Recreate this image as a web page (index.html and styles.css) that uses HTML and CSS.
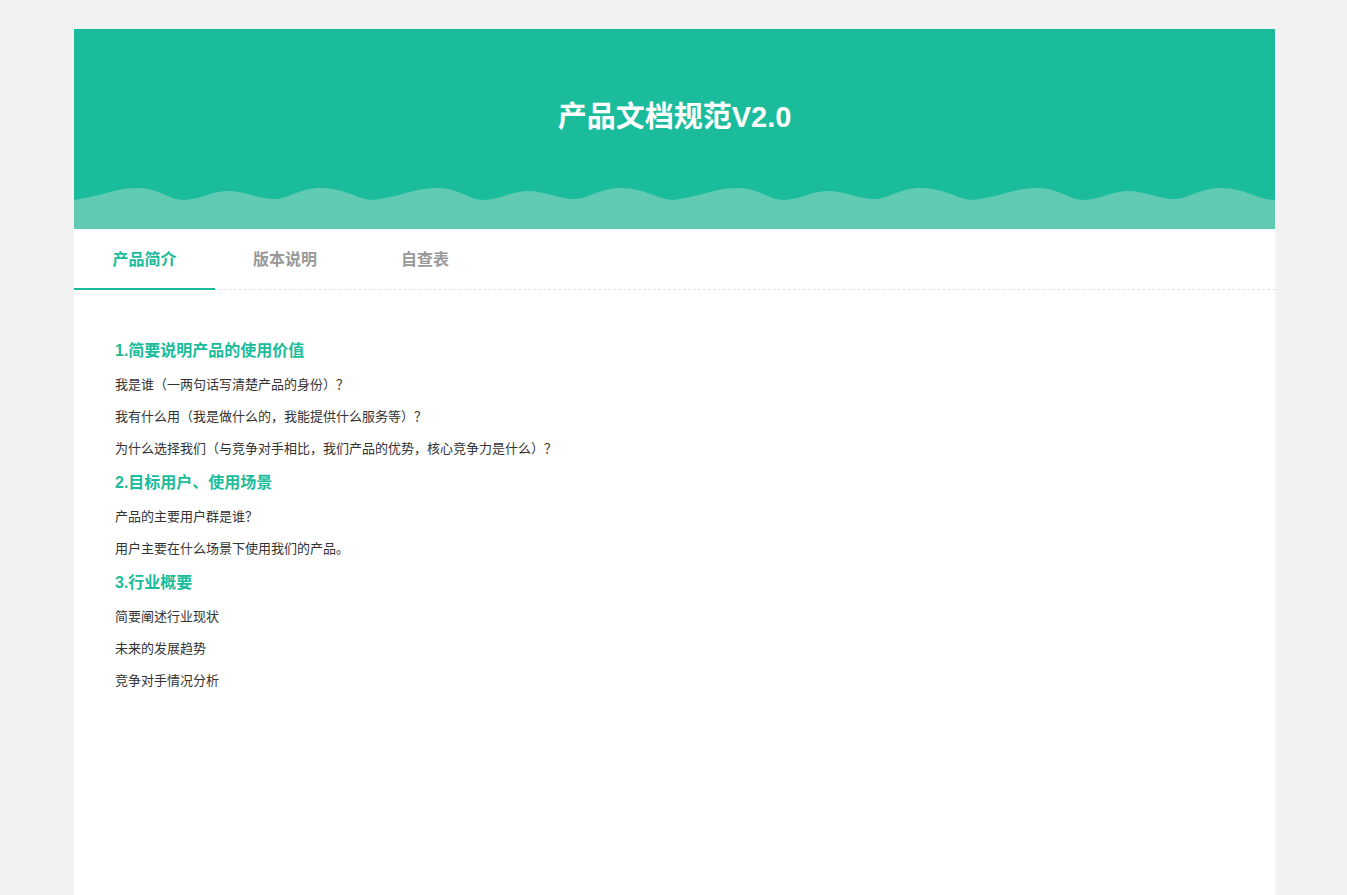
FILE: index.html
```html
<!DOCTYPE html>
<html lang="zh-CN">
<head>
<meta charset="utf-8">
<title>产品文档规范V2.0</title>
<link rel="stylesheet" href="styles.css">
</head>
<body>
<div class="page">
  <div class="doc">
    <header class="banner">
      <h1 class="banner-title">产品文档规范V2.0</h1>
      <svg class="wave" width="100%" height="42" xmlns="http://www.w3.org/2000/svg" preserveAspectRatio="none">
        <defs>
          <pattern id="wavetile" x="0" y="0" width="300" height="42" patternUnits="userSpaceOnUse">
            <path d="M0,13 C25,10 40,1 63,1 C85,1 95,13 110,13 C125,13 138,4 153,4 C170,4 185,12 200,12 C215,12 225,1 247,1 C270,1 285,13 300,13 L300,42 L0,42 Z" fill="#60cab3"/>
          </pattern>
        </defs>
        <rect x="0" y="0" width="100%" height="42" fill="url(#wavetile)"/>
      </svg>
    </header>
    <nav class="tabs">
      <div class="tab active">产品简介</div>
      <div class="tab">版本说明</div>
      <div class="tab">自查表</div>
    </nav>
    <main class="content">
      <h2 class="sec-title">1.简要说明产品的使用价值</h2>
      <p class="line">我是谁（一两句话写清楚产品的身份）？</p>
      <p class="line">我有什么用（我是做什么的，我能提供什么服务等）？</p>
      <p class="line">为什么选择我们（与竞争对手相比，我们产品的优势，核心竞争力是什么）？</p>
      <h2 class="sec-title">2.目标用户、使用场景</h2>
      <p class="line">产品的主要用户群是谁？</p>
      <p class="line">用户主要在什么场景下使用我们的产品。</p>
      <h2 class="sec-title">3.行业概要</h2>
      <p class="line">简要阐述行业现状</p>
      <p class="line">未来的发展趋势</p>
      <p class="line">竞争对手情况分析</p>
    </main>
  </div>
</div>
</body>
</html>
```

FILE: styles.css
```css
html, body {
  margin: 0;
  padding: 0;
  background: #f2f2f2;
  font-family: "Liberation Sans", "Noto Sans CJK SC", sans-serif;
  height: 100%;
  overflow: hidden;
}

.page {
  padding: 29px 72px 0 74px;
  height: 100%;
  box-sizing: border-box;
}

.doc {
  background: #ffffff;
  min-height: 100%;
  display: flex;
  flex-direction: column;
}

.banner {
  background: #1bbc9b;
  height: 200px;
  display: flex;
  flex-direction: column;
  justify-content: space-between;
}

.banner-title {
  margin: 0;
  padding-top: 70px;
  text-align: center;
  color: #ffffff;
  font-size: 29px;
  font-weight: bold;
  line-height: 36px;
}

.wave {
  display: block;
  height: 42px;
}

.tabs {
  display: flex;
  height: 60px;
  border-bottom: 1px dashed #e3e3e3;
}

.tab {
  width: 140px;
  height: 60px;
  line-height: 62px;
  text-align: center;
  font-size: 16px;
  font-weight: bold;
  color: #999999;
  box-sizing: border-box;
}

.tab.active {
  width: 141px;
  height: 61px;
  color: #1bbc9b;
  border-bottom: 2px solid #1bbc9b;
  line-height: 61px;
}

.content {
  padding: 43px 41px 40px 41px;
}

.sec-title {
  margin: 0;
  font-size: 16px;
  font-weight: bold;
  color: #1bbc9b;
  line-height: 36px;
}

.line {
  margin: 0;
  font-size: 13px;
  color: #333333;
  line-height: 32px;
}
```
